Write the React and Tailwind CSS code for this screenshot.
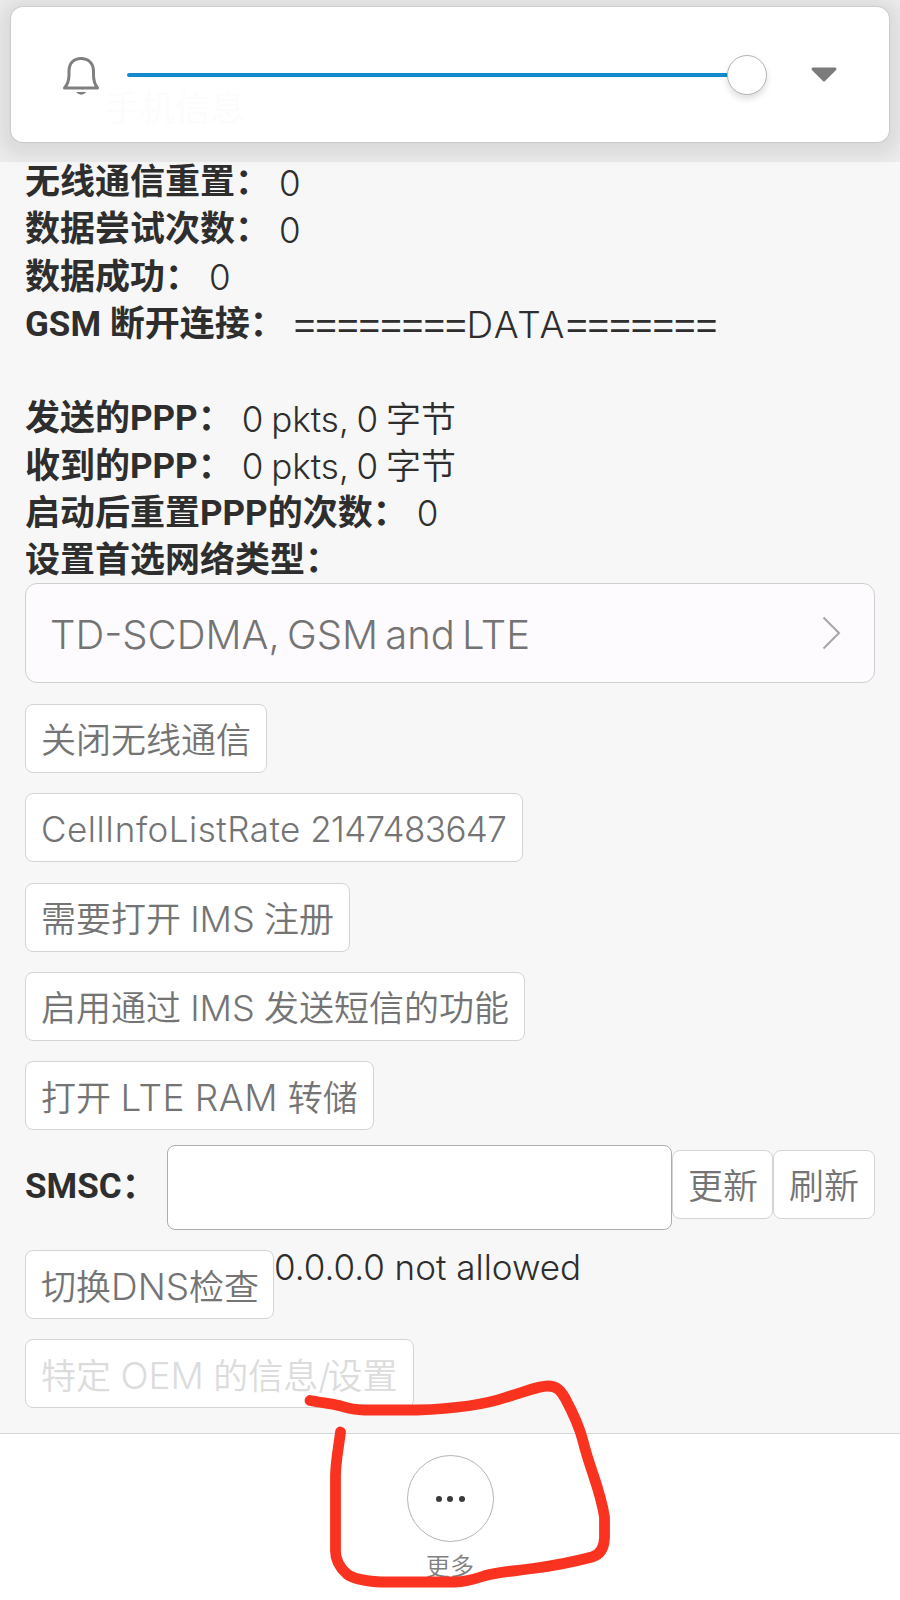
import React from 'react';

const stats = [
  { label: '无线通信重置：', value: '0' },
  { label: '数据尝试次数：', value: '0' },
  { label: '数据成功：', value: '0' },
  {
    label: 'GSM 断开连接：',
    value: (
      <>
        <span className="font-['Liberation_Sans',sans-serif] text-[37px]">========</span>
        <span className="text-[37px] tracking-[1.7px]">DATA</span>
        <span className="font-['Liberation_Sans',sans-serif] text-[37px]">=======</span>
      </>
    ),
  },
  { label: '', value: '' },
  { label: '发送的PPP：', value: '0 pkts, 0 字节' },
  { label: '收到的PPP：', value: '0 pkts, 0 字节' },
  { label: '启动后重置PPP的次数：', value: '0' },
  { label: '设置首选网络类型：', value: '' },
];

const actions = [
  { key: 'radio', text: '关闭无线通信', width: 'w-[242px]' },
  {
    key: 'rate',
    text: (
      <>
        <span className="tracking-[0.5px]">CellInfoListRate</span>
        <span className="tracking-[-0.6px]"> 2147483647</span>
      </>
    ),
    width: 'w-[498px]',
  },
  {
    key: 'ims',
    text: <>需要打开<span className="text-[36px] [word-spacing:-1px]"> IMS </span>注册</>,
    width: 'w-[325px]',
  },
  {
    key: 'sms',
    text: <>启用通过<span className="text-[36px] [word-spacing:-1px]"> IMS </span>发送短信的功能</>,
    width: 'w-[500px]',
  },
  {
    key: 'ram',
    text: <>打开<span className="text-[37px] tracking-[0.6px] [word-spacing:-1.500px]"> LTE RAM </span>转储</>,
    width: 'w-[349px]',
  },
];

const labelFont = "font-['Roboto','Noto_Sans_CJK_SC',sans-serif] font-bold";

const Button = ({ className = '', color = 'text-[#747474]', children }) => (
  <button
    className={`h-[69px] shrink-0 whitespace-nowrap rounded-lg border border-[#d4d4d4] bg-white pl-[15px] pt-1 text-left text-[35px] leading-[63px] ${color} ${className}`}
  >
    {children}
  </button>
);

const VolumePanel = () => (
  <div className="absolute left-[11px] top-[7px] flex h-[135px] w-[878px] items-center rounded-xl bg-white shadow-[0_0_1px_1px_rgba(0,0,0,0.08),0_4px_16px_10px_rgba(0,0,0,0.07)]">
    <svg className="absolute left-[50px] top-[48px]" width="40" height="42" viewBox="0 0 40 42" fill="none">
      <path
        d="M3.5 33 C7 29 8 26 8 20 V16 C8 8 13 3.5 20 3.5 C27 3.5 32.500 8 32.500 16 V20 C32.500 26 33.500 29 36.500 33 Z"
        stroke="#7f7f7f"
        strokeWidth="3"
        strokeLinejoin="round"
      />
      <path d="M15 37 H25.500 Q20.200 42.500 15 37 Z" fill="#7f7f7f" />
    </svg>
    <span className="absolute left-[94px] top-[79px] text-[35px] leading-[44px] text-[#fcfcfc]">手机信息</span>
    <div className="ml-[116px] h-1 w-[602px] rounded-full bg-[#1589cf]" />
    <div className="-ml-0.5 size-10 rounded-full border border-[#b4b4b4] bg-white shadow-[0_4px_6px_rgba(0,0,0,0.13)]" />
    <svg className="ml-[43px]" width="28" height="18" viewBox="0 0 28 18">
      <path d="M3 3 H25 L14 14 Z" fill="#7b7b7b" stroke="#7b7b7b" strokeWidth="3" strokeLinejoin="round" />
    </svg>
  </div>
);

const Marker = () => (
  <svg className="pointer-events-none absolute left-0 top-0" width="900" height="1600" viewBox="0 0 900 1600" fill="none">
    <path
      d="M310 1400.500 C322 1403 331 1403 339 1405.500 C347 1408 352 1410 364 1410 H417 C450 1409 484 1405 507 1397 C527 1391 538 1386 548 1386 C557 1386 561 1391 565 1398 C572 1411 579 1425 583 1441 C590 1470 600 1488 604.500 1517 V1538 C604 1549 599 1555 592 1557 C573 1562 552 1566 533 1568.500 C514 1571 497 1572 484 1576 C472 1580 465 1582 455 1582 H380 C365 1581 353 1579 347 1574 C339 1567 335.500 1559 335.500 1551 V1475 C336 1459 339 1445 340.500 1432"
      stroke="#f93320"
      strokeWidth="10.8"
      strokeLinecap="round"
      strokeLinejoin="round"
    />
  </svg>
);

export default function App() {
  return (
    <div className="relative flex h-[1600px] w-[900px] flex-col overflow-hidden bg-[#f7f7f7] font-['Inter','Noto_Sans_CJK_SC',sans-serif] font-[350] text-[#2e2e2e]">
      {/* dimmed status area behind the volume panel */}
      <div className="absolute inset-x-0 top-0 h-[162px] bg-[#ebebec]" />

      <main className="relative flex h-[1433px] flex-col px-[25px] pt-[159px]">
        <div className="h-[424px]">
          {stats.map((row, index) => (
            <div key={index} className="flex h-[47.25px] items-center whitespace-pre text-[35px] leading-[47px]">
              <span className={labelFont}>{row.label}</span>
              <span className="ml-[9px] pt-px [word-spacing:-2px]">{row.value}</span>
            </div>
          ))}
        </div>

        <div className="flex h-[100px] shrink-0 items-center justify-between rounded-xl border border-[#cfcfcf] bg-[#fdfbfe] pl-[24px] pr-[33px] text-[#747474]">
          <span className="pt-1 text-[40px] [word-spacing:-4px]">TD-SCDMA, GSM and LTE</span>
          <svg width="19" height="34" viewBox="0 0 19 34" fill="none">
            <path d="M1.500 1.500 L17 17 L1.500 32.500" stroke="#a5a5a5" strokeWidth="2" />
          </svg>
        </div>

        <div className="mt-[21px] flex flex-col items-start gap-[20.25px]">
          {actions.map((action) => (
            <Button key={action.key} className={action.width}>{action.text}</Button>
          ))}
        </div>

        <div className="mt-[15px] flex h-[85px] shrink-0 items-center">
          <span className={`w-[142px] whitespace-nowrap text-[35px] ${labelFont}`}>SMSC：</span>
          <input className="h-[85px] w-[505px] rounded-lg border border-[#adadad] bg-white" />
          <Button className="-mt-[6px] w-[101px]">更新</Button>
          <Button className="-mt-[6px] w-[102px]">刷新</Button>
        </div>

        <div className="mt-[20px] flex items-start">
          <Button className="w-[249px]">切换<span className="text-[37px]">DNS</span>检查</Button>
          <span className="text-[35px] leading-[35px]">0.0.0.0 not allowed</span>
        </div>

        <div className="mt-[20px]">
          <Button className="w-[389px]" color="text-[#dcdcdc]">
            特定<span className="text-[37px] [word-spacing:-1px]"> OEM </span>的信息<span className="tracking-[-3px]">/</span>设置
          </Button>
        </div>
      </main>

      <footer className="flex flex-1 flex-col items-center border-t border-[#d6d6d6] bg-white pt-[21px]">
        <div className="flex size-[87px] items-center justify-center gap-[5.5px] rounded-full border border-[#b5b5b5]">
          <i className="size-1.5 rounded-full bg-[#3a3a3a]" />
          <i className="size-1.5 rounded-full bg-[#3a3a3a]" />
          <i className="size-1.5 rounded-full bg-[#3a3a3a]" />
        </div>
        <span className="mt-[7px] text-[24px] leading-[36px] text-[#808080]">更多</span>
      </footer>

      <VolumePanel />
      <Marker />
    </div>
  );
}
